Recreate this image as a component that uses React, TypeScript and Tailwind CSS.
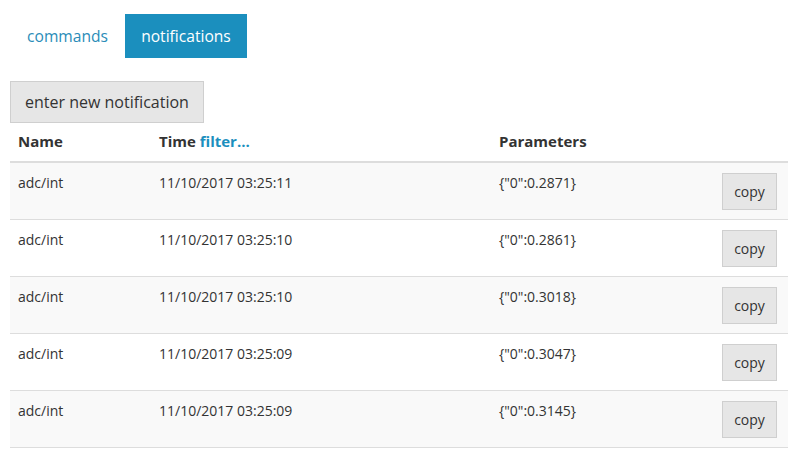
const rows = [
  { name: "adc/int", time: "11/10/2017 03:25:11", params: '{"0":0.2871}' },
  { name: "adc/int", time: "11/10/2017 03:25:10", params: '{"0":0.2861}' },
  { name: "adc/int", time: "11/10/2017 03:25:10", params: '{"0":0.3018}' },
  { name: "adc/int", time: "11/10/2017 03:25:09", params: '{"0":0.3047}' },
  { name: "adc/int", time: "11/10/2017 03:25:09", params: '{"0":0.3145}' },
];

export default function App() {
  return (
    <div className="h-[454px] w-[800px] overflow-hidden bg-white px-[10px] font-['Open_Sans',sans-serif] text-[#333]">
      {/* Tabs */}
      <div className="mt-[14px] flex">
        <div className="w-[115px] py-[10px] text-center text-[15.6px] leading-6 text-[#2a8cb8]">commands</div>
        <div className="w-[122px] bg-[#1b8fbe] py-[10px] text-center text-[15.6px] leading-6 text-white">notifications</div>
      </div>

      <button className="mt-[23px] h-[42px] border border-[#cfcfcf] bg-[#e6e6e6] px-[14px] text-base leading-6 text-[#333]">
        enter new notification
      </button>

      {/* Table */}
      <div className="w-[778px] text-sm">
        <div className="grid h-[40px] grid-cols-[141px_340px_1fr] items-center border-b-2 border-[#ddd] text-[15px] font-bold">
          <div className="px-2">Name</div>
          <div className="px-2">
            Time <span className="text-[#1b8fbe]">filter...</span>
          </div>
          <div className="px-2">Parameters</div>
        </div>
        {rows.map((r, i) => (
          <div
            key={i}
            className={`grid h-[57px] grid-cols-[141px_340px_1fr_auto] border-b border-[#ddd] ${
              i % 2 === 0 ? "bg-[#f9f9f9]" : "bg-white"
            }`}
          >
            <div className="px-2 pt-[10px] leading-5">{r.name}</div>
            <div className="px-2 pt-[10px] leading-5">{r.time}</div>
            <div className="px-2 pt-[10px] leading-5">{r.params}</div>
            <div className="pr-[11px] pt-[10px]">
              <button className="h-[37px] w-[55px] border border-[#cfcfcf] bg-[#e6e6e6] text-sm text-[#333]">
                copy
              </button>
            </div>
          </div>
        ))}
      </div>
    </div>
  );
}
